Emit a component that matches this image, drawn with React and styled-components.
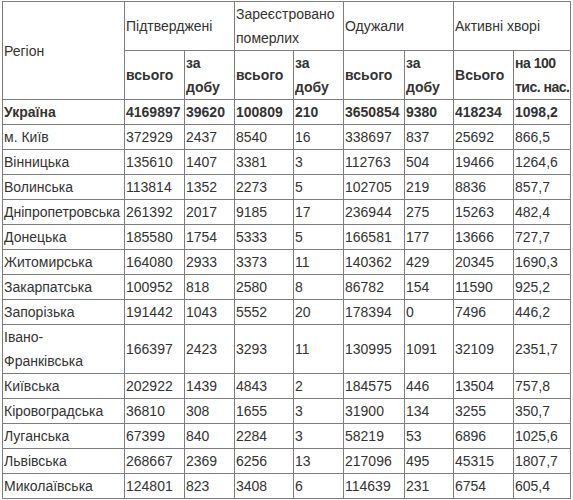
import React from 'react';
import styled, { createGlobalStyle } from 'styled-components';

const GlobalStyle = createGlobalStyle`
    body {
        margin: 0;
        background: #fff;
        font-family: "Liberation Sans", Arial, sans-serif;
    }
`

const Wrapper = styled.div`
    padding: 1px 0 0 2px;
`

const Table = styled.table`
    border-collapse: collapse;
    table-layout: fixed;
    width: 569px;
    font-size: 14px;
    line-height: 24px;
    color: #333;
`

const Cell = styled.td`
    border: 1px solid #7d7d7d;
    padding: 0 2px 0 1px;
    vertical-align: middle;
    text-align: left;
    font-weight: ${props => (props.$bold ? 'bold' : 'normal')};
`

const HeadCell = styled(Cell).attrs({ as: 'th' })`
    white-space: ${props => (props.$nowrap ? 'nowrap' : 'normal')};
    letter-spacing: ${props => (props.$tight ? '-0.5px' : 'normal')};
`

const widths = [122, 60, 50, 59, 50, 61, 49, 60, 57];

const rows = [
    ['Україна', '4169897', '39620', '100809', '210', '3650854', '9380', '418234', '1098,2'],
    ['м. Київ', '372929', '2437', '8540', '16', '338697', '837', '25692', '866,5'],
    ['Вінницька', '135610', '1407', '3381', '3', '112763', '504', '19466', '1264,6'],
    ['Волинська', '113814', '1352', '2273', '5', '102705', '219', '8836', '857,7'],
    ['Дніпропетровська', '261392', '2017', '9185', '17', '236944', '275', '15263', '482,4'],
    ['Донецька', '185580', '1754', '5333', '5', '166581', '177', '13666', '727,7'],
    ['Житомирська', '164080', '2933', '3373', '11', '140362', '429', '20345', '1690,3'],
    ['Закарпатська', '100952', '818', '2580', '8', '86782', '154', '11590', '925,2'],
    ['Запорізька', '191442', '1043', '5552', '20', '178394', '0', '7496', '446,2'],
    ['Івано-Франківська', '166397', '2423', '3293', '11', '130995', '1091', '32109', '2351,7'],
    ['Київська', '202922', '1439', '4843', '2', '184575', '446', '13504', '757,8'],
    ['Кіровоградська', '36810', '308', '1655', '3', '31900', '134', '3255', '350,7'],
    ['Луганська', '67399', '840', '2284', '3', '58219', '53', '6896', '1025,6'],
    ['Львівська', '268667', '2369', '6256', '13', '217096', '495', '45315', '1807,7'],
    ['Миколаївська', '124801', '823', '3408', '6', '114639', '231', '6754', '605,4'],
];

const App = () => {
    return (
        <Wrapper>
            <GlobalStyle />
            <Table>
                <colgroup>
                    {widths.map((w, i) => <col key={i} style={{ width: w }} />)}
                </colgroup>
                <thead>
                    <tr>
                        <HeadCell rowSpan={2}>Регіон</HeadCell>
                        <HeadCell colSpan={2}>Підтверджені</HeadCell>
                        <HeadCell colSpan={2}>Зареєстровано померлих</HeadCell>
                        <HeadCell colSpan={2}>Одужали</HeadCell>
                        <HeadCell colSpan={2}>Активні хворі</HeadCell>
                    </tr>
                    <tr>
                        <HeadCell $bold>всього</HeadCell>
                        <HeadCell $bold $nowrap>за<br />добу</HeadCell>
                        <HeadCell $bold>всього</HeadCell>
                        <HeadCell $bold $nowrap>за<br />добу</HeadCell>
                        <HeadCell $bold>всього</HeadCell>
                        <HeadCell $bold $nowrap>за<br />добу</HeadCell>
                        <HeadCell $bold>Всього</HeadCell>
                        <HeadCell $bold $nowrap $tight>на 100<br />тис. нас.</HeadCell>
                    </tr>
                </thead>
                <tbody>
                    {rows.map((row, i) => (
                        <tr key={row[0]}>
                            {row.map((value, j) => (
                                <Cell key={j} $bold={i === 0}>{value}</Cell>
                            ))}
                        </tr>
                    ))}
                </tbody>
            </Table>
        </Wrapper>
    );
};

export default App;
